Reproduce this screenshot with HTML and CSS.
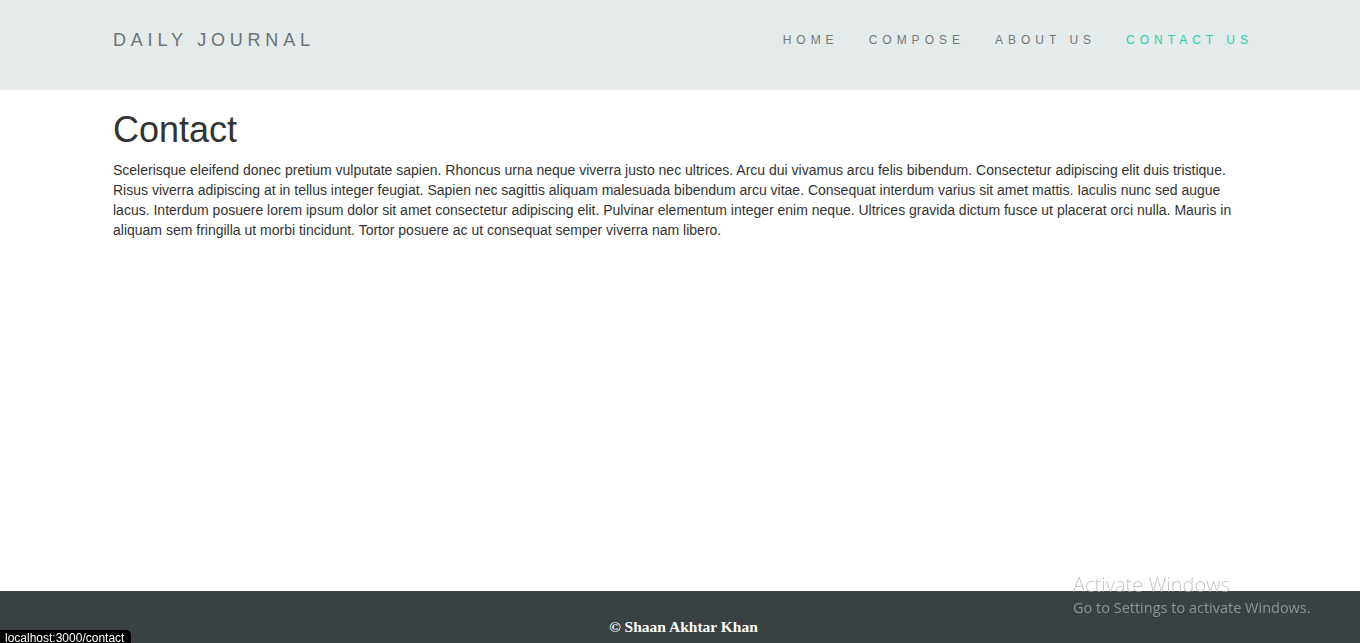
FILE: index.html
```html
<!DOCTYPE html>
<html lang="en">
<head>
<meta charset="utf-8">
<title>Daily Journal</title>
<link rel="stylesheet" href="styles.css">
</head>
<body>
<div class="page">
  <header class="navbar">
    <div class="container nav-row">
      <a class="brand" href="#">DAILY JOURNAL</a>
      <ul class="nav-links">
        <li><a href="#">HOME</a></li>
        <li><a href="#">COMPOSE</a></li>
        <li><a href="#">ABOUT US</a></li>
        <li><a class="active" href="#">CONTACT US</a></li>
      </ul>
    </div>
  </header>
  <main class="container main">
    <h1>Contact</h1>
    <p>Scelerisque eleifend donec pretium vulputate sapien. Rhoncus urna neque viverra justo nec ultrices. Arcu dui vivamus arcu felis bibendum. Consectetur adipiscing elit duis tristique. Risus viverra adipiscing at in tellus integer feugiat. Sapien nec sagittis aliquam malesuada bibendum arcu vitae. Consequat interdum varius sit amet mattis. Iaculis nunc sed augue lacus. Interdum posuere lorem ipsum dolor sit amet consectetur adipiscing elit. Pulvinar elementum integer enim neque. Ultrices gravida dictum fusce ut placerat orci nulla. Mauris in aliquam sem fringilla ut morbi tincidunt. Tortor posuere ac ut consequat semper viverra nam libero.</p>
  </main>
  <footer class="footer">
    <p>© Shaan Akhtar Khan</p>
  </footer>
</div>
<div class="watermark">
  <div class="wm-title">Activate Windows</div>
  <div class="wm-sub">Go to Settings to activate Windows.</div>
</div>
<div class="statusbar">localhost:3000/contact</div>
</body>
</html>
```
FILE: styles.css
```css
* { box-sizing: border-box; }
html, body { margin: 0; padding: 0; }
body {
  font-family: "Liberation Sans", Arial, Helvetica, sans-serif;
  font-size: 14px;
  line-height: 20px;
  color: #333;
  background: #fff;
}
.page {
  min-height: 100vh;
  display: flex;
  flex-direction: column;
}
.container {
  width: 1170px;
  margin: 0 auto;
  padding: 0 15px;
}
.navbar {
  background: #e4ebea;
  height: 90px;
  padding-top: 15px;
}
.nav-row {
  display: flex;
  justify-content: space-between;
  align-items: center;
  height: 50px;
}
.brand {
  font-size: 18px;
  letter-spacing: 4.8px;
  color: #6e7173;
  text-decoration: none;
  line-height: 50px;
  margin-left: 3px;
}
.nav-links {
  list-style: none;
  margin: 0 -18px 0 0;
  padding: 0;
  display: flex;
}
.nav-links a {
  display: block;
  padding: 0 15px;
  line-height: 50px;
  font-size: 12px;
  letter-spacing: 5px;
  color: #777;
  text-decoration: none;
}
.nav-links a.active { color: #24d1ab; }
.main { flex: 1; padding-left: 18px; }
h1 {
  font-size: 36px;
  font-weight: 500;
  line-height: 1.1;
  margin: 20px 0 10px;
  color: #333;
}
.main p {
  margin: 0 0 10px;
}
.footer {
  background: #3a4142;
  height: 52px;
  padding: 26px 0 0 7px;
  text-align: center;
}
.footer p {
  margin: 0;
  color: #fff;
  font-family: "Liberation Serif", "Times New Roman", serif;
  font-weight: bold;
  font-size: 15.5px;
  line-height: 20px;
}
.watermark {
  position: fixed;
  left: 1073px;
  top: 572px;
  font-family: "Open Sans", "Noto Sans", sans-serif;
  color: rgba(175, 178, 178, 0.72);
}
.wm-title { font-size: 20px; line-height: 25px; font-weight: 300; }
.wm-sub { font-size: 14.5px; line-height: 22px; font-weight: 400; }
.statusbar {
  position: fixed;
  left: 0;
  bottom: 0;
  width: 131px;
  height: 13px;
  background: #000;
  color: #fff;
  font-family: "Liberation Sans", Arial, sans-serif;
  font-size: 12px;
  line-height: 16px;
  padding-left: 5px;
  border-top-right-radius: 5px;
  overflow: hidden;
  white-space: nowrap;
}
```
